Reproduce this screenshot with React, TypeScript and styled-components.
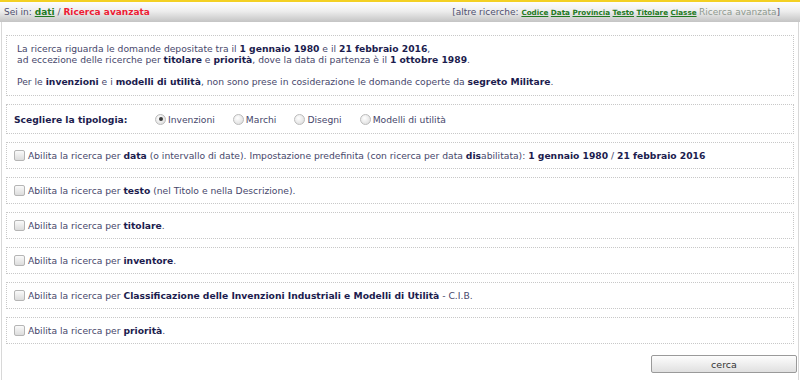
import React from "react";
import styled, { createGlobalStyle } from "styled-components";

const Global = createGlobalStyle`
  html, body { margin: 0; padding: 0; background: #fff; }
  body { font-family: "DejaVu Sans", Verdana, sans-serif; font-size: 9px; color: #47476b; }
`;

const Page = styled.div`
  width: 800px;
  height: 380px;
  box-sizing: border-box;
  border-top: 2px solid #f3d023;
  display: flex;
  flex-direction: column;
`;

const Bar = styled.div`
  height: 20px;
  flex-shrink: 0;
  display: flex;
  align-items: center;
  justify-content: space-between;
  padding: 0 20px 0 4px;
  background: linear-gradient(#fdfdfd 0%, #eeeeee 45%, #c4c4c4 100%);
  font-size: 9px;
  color: #4f4f6f;
`;

const Crumb = styled.span`
  white-space: nowrap;
`;

const Link = styled.a<{ $small?: boolean }>`
  color: #1f7a1f;
  font-weight: bold;
  text-decoration: underline;
  font-size: ${(p) => (p.$small ? "7.2px" : "9px")};
  margin-right: ${(p) => (p.$small ? "2.5px" : "0")};
`;

const Current = styled.span`
  color: #ee1c34;
  font-weight: bold;
`;

const Muted = styled.span`
  color: #8f9a8f;
`;

const Body = styled.div`
  flex: 1;
  border-left: 1px solid #d8d8d8;
  border-right: 1px solid #d8d8d8;
  margin: 0 1px;
  padding: 13px 4px 0 4px;
  display: flex;
  flex-direction: column;
  gap: 8px;
  font-size: 9.2px;
`;

const Box = styled.div<{ $pad?: string }>`
  border: 1px dotted #c8c8c8;
  padding: ${(p) => p.$pad || "7px"};
  line-height: 11px;
`;

const Para = styled.p`
  margin: 0;
  & + & { margin-top: 11px; }
`;

const B = styled.b`
  color: #1c1c4e;
`;

const TypeRow = styled.div`
  display: flex;
  align-items: center;
  height: 12px;
`;

const TypeLabel = styled.span`
  font-weight: bold;
  color: #1c1c4e;
  width: 141px;
`;

const RadioItem = styled.label`
  display: inline-flex;
  align-items: center;
  margin-right: 18px;
`;

const Radio = styled.span<{ $on?: boolean }>`
  box-sizing: border-box;
  width: 11px;
  height: 11px;
  border-radius: 50%;
  border: 1px solid #bcbcbc;
  background: radial-gradient(circle at 40% 35%, #fff, #d8d8d8);
  margin-right: 2px;
  position: relative;
  &::after {
    content: "";
    display: ${(p) => (p.$on ? "block" : "none")};
    position: absolute;
    left: 2.5px;
    top: 2.5px;
    width: 4px;
    height: 4px;
    border-radius: 50%;
    background: #3a3a3a;
  }
`;

const CheckRow = styled.label`
  display: flex;
  align-items: center;
`;

const Check = styled.span`
  box-sizing: border-box;
  width: 11px;
  height: 11px;
  border: 1px solid #b5b5b5;
  border-radius: 2px;
  background: linear-gradient(#fafafa, #dcdcdc);
  margin-right: 3px;
  flex-shrink: 0;
`;

const Footer = styled.div`
  display: flex;
  justify-content: flex-end;
  margin-top: 3px;
`;

const Button = styled.button`
  width: 146px;
  height: 18px;
  border: 1px solid #9a9a9a;
  border-radius: 2px;
  background: linear-gradient(#fdfdfd, #e0e0e0);
  font-family: "DejaVu Sans", Verdana, sans-serif;
  font-size: 9.5px;
  color: #333;
  padding: 0;
  margin-right: -3px;
`;

const rows: React.ReactNode[] = [
  <>
    Abilita la ricerca per <B>data</B> (o intervallo di date). Impostazione predefinita (con ricerca per data <B>dis</B>abilitata): <B>1 gennaio 1980</B> / <B>21 febbraio 2016</B>
  </>,
  <>
    Abilita la ricerca per <B>testo</B> (nel Titolo e nella Descrizione).
  </>,
  <>
    Abilita la ricerca per <B>titolare</B>.
  </>,
  <>
    Abilita la ricerca per <B>inventore</B>.
  </>,
  <>
    Abilita la ricerca per <B>Classificazione delle Invenzioni Industriali e Modelli di Utilità</B> - C.I.B.
  </>,
  <>
    Abilita la ricerca per <B>priorità</B>.
  </>,
];

export default function App() {
  return (
    <>
      <Global />
      <Page>
        <Bar>
          <Crumb>
            Sei in: <Link>dati</Link> / <Current>Ricerca avanzata</Current>
          </Crumb>
          <Crumb>
            [altre ricerche: <Link $small>Codice</Link>
            <Link $small>Data</Link>
            <Link $small>Provincia</Link>
            <Link $small>Testo</Link>
            <Link $small>Titolare</Link>
            <Link $small>Classe</Link>
            <Muted>Ricerca avanzata</Muted>]
          </Crumb>
        </Bar>
        <Body>
          <Box $pad="7px 10px 8px">
            <Para>
              La ricerca riguarda le domande depositate tra il <B>1 gennaio 1980</B> e il <B>21 febbraio 2016</B>,
              <br />
              ad eccezione delle ricerche per <B>titolare</B> e <B>priorità</B>, dove la data di partenza è il <B>1 ottobre 1989</B>.
            </Para>
            <Para>
              Per le <B>invenzioni</B> e i <B>modelli di utilità</B>, non sono prese in cosiderazione le domande coperte da <B>segreto Militare</B>.
            </Para>
          </Box>
          <Box $pad="8px 7px">
            <TypeRow>
              <TypeLabel>Scegliere la tipologia:</TypeLabel>
              <RadioItem><Radio $on />Invenzioni</RadioItem>
              <RadioItem><Radio />Marchi</RadioItem>
              <RadioItem><Radio />Disegni</RadioItem>
              <RadioItem><Radio />Modelli di utilità</RadioItem>
            </TypeRow>
          </Box>
          {rows.map((r, i) => (
            <Box key={i}>
              <CheckRow>
                <Check />
                <span>{r}</span>
              </CheckRow>
            </Box>
          ))}
          <Footer>
            <Button>cerca</Button>
          </Footer>
        </Body>
      </Page>
    </>
  );
}
